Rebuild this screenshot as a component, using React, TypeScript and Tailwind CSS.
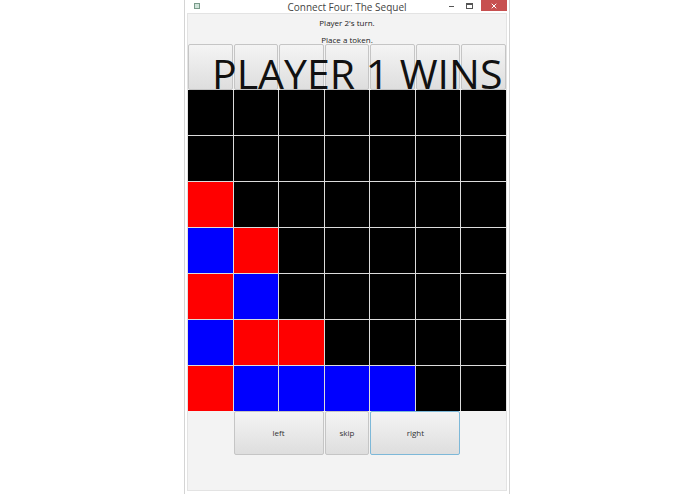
import { X } from "lucide-react";

// board state, top row first: 0 empty, 1 red, 2 blue
const board: number[][] = [
  [0, 0, 0, 0, 0, 0, 0],
  [0, 0, 0, 0, 0, 0, 0],
  [1, 0, 0, 0, 0, 0, 0],
  [2, 1, 0, 0, 0, 0, 0],
  [1, 2, 0, 0, 0, 0, 0],
  [2, 1, 1, 0, 0, 0, 0],
  [1, 2, 2, 2, 2, 0, 0],
];

const cellColor = ["bg-black", "bg-[#ff0000]", "bg-[#0000ff]"];

const btn = "rounded-[2px] border bg-gradient-to-b from-[#f4f4f4] to-[#dedede]";

function TitleBar() {
  return (
    <div className="relative flex h-[13px] items-center justify-center">
      <div className="absolute left-[7px] top-[3px] h-[6px] w-[6px] border border-[#7a9a8a] bg-[#cfe3d9]" />
      <span className="text-[10px] leading-none text-[#444]">Connect Four: The Sequel</span>
      <div className="absolute right-0 top-0 flex items-start">
        <div className="mr-[12px] mt-[6px] h-px w-[5px] bg-[#555]" />
        <div className="mr-[8px] mt-[3px] h-[6px] w-[7px] border border-[#555] border-t-2" />
        <div className="flex h-[11px] w-[26px] items-center justify-center bg-[#c75050]">
          <X size={8} strokeWidth={3} className="text-white" />
        </div>
      </div>
    </div>
  );
}

export default function App() {
  return (
    <div
      className="flex h-[494px] w-full bg-white"
      style={{ fontFamily: '"Open Sans", "Noto Sans", sans-serif' }}
    >
      <div className="ml-[184px] flex h-[494px] w-[326px] flex-col border-x border-[#d4d4d4] px-[2px]">
        <TitleBar />
        <div className="flex h-[478px] flex-col border border-[#e3e3e3] bg-[#f3f3f3]">
          <div className="flex h-[30px] flex-col items-center text-[8px] text-[#222]">
            <span className="leading-[17px]">Player 2's turn.</span>
            <span className="leading-[18px]">Place a token.</span>
          </div>

          <div className="relative z-10 grid h-[46px] grid-cols-7 gap-px">
            {board[0].map((_, i) => (
              <div key={i} className={`${btn} border-[#c5c5c5]`} />
            ))}
            <span className="pointer-events-none absolute left-[24px] top-[9px] whitespace-nowrap text-[41px] leading-none text-[#111]">
              PLAYER 1 WINS
            </span>
          </div>

          <div className="grid grid-cols-7 gap-px bg-[#dcdcdc]">
            {board.flatMap((row, r) =>
              row.map((v, c) => (
                <div key={`${r}-${c}`} className={`h-[45px] ${cellColor[v]}`} />
              ))
            )}
          </div>

          <div className="grid h-[44px] grid-cols-7 gap-px text-[8px] text-[#333]">
            <button className={`col-start-2 col-span-2 ${btn} border-[#c5c5c5]`}>left</button>
            <button className={`col-start-4 ${btn} border-[#c5c5c5]`}>skip</button>
            <button className={`col-start-5 col-span-2 ${btn} border-[#7db8d8]`}>right</button>
          </div>
        </div>
      </div>
    </div>
  );
}
